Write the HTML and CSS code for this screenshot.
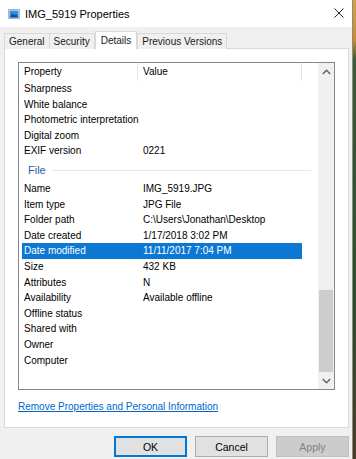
FILE: index.html
```html
<!DOCTYPE html>
<html>
<head>
    <title>IMG_5919 Properties</title>
    <link rel="stylesheet" href="styles.css">
</head>
<body>

<div class="window">
    <div class="titlebar">
        <svg class="title-icon" width="12" height="12" viewBox="0 0 12 12">
            <rect x="0.5" y="1.5" width="11" height="9" fill="#fff" stroke="#9fb6cc"/>
            <rect x="1.5" y="2.5" width="9" height="7" fill="#2f8fe0"/>
            <path d="M1.5 9.5 L4.5 5.5 L6.5 7.5 L8 6 L10.5 9.5 Z" fill="#0d4f9a"/>
        </svg>
        <span class="title-text">IMG_5919 Properties</span>
        <svg class="close" width="10" height="10" viewBox="0 0 10 10">
            <path d="M0.5 0.5 L9.5 9.5 M9.5 0.5 L0.5 9.5" stroke="#222" stroke-width="1"/>
        </svg>
    </div>

    <div class="tabs">
        <div class="tab">General</div>
        <div class="tab">Security</div>
        <div class="tab active">Details</div>
        <div class="tab">Previous Versions</div>
    </div>

    <div class="panel">
        <div class="list">
            <div class="list-body">
                <div class="list-header">
                    <div class="col-name">Property</div>
                    <div class="col-value">Value</div>
                </div>
                <div class="row"><div class="col-name">Sharpness</div><div class="col-value"></div></div>
                <div class="row"><div class="col-name">White balance</div><div class="col-value"></div></div>
                <div class="row"><div class="col-name">Photometric interpretation</div><div class="col-value"></div></div>
                <div class="row"><div class="col-name">Digital zoom</div><div class="col-value"></div></div>
                <div class="row"><div class="col-name">EXIF version</div><div class="col-value">0221</div></div>
                <div class="group">
                    <span>File</span>
                    <div class="group-line"></div>
                </div>
                <div class="row"><div class="col-name">Name</div><div class="col-value">IMG_5919.JPG</div></div>
                <div class="row"><div class="col-name">Item type</div><div class="col-value">JPG File</div></div>
                <div class="row"><div class="col-name">Folder path</div><div class="col-value">C:\Users\Jonathan\Desktop</div></div>
                <div class="row"><div class="col-name">Date created</div><div class="col-value">1/17/2018 3:02 PM</div></div>
                <div class="row selected"><div class="col-name">Date modified</div><div class="col-value">11/11/2017 7:04 PM</div></div>
                <div class="row"><div class="col-name">Size</div><div class="col-value">432 KB</div></div>
                <div class="row"><div class="col-name">Attributes</div><div class="col-value">N</div></div>
                <div class="row"><div class="col-name">Availability</div><div class="col-value">Available offline</div></div>
                <div class="row"><div class="col-name">Offline status</div><div class="col-value"></div></div>
                <div class="row"><div class="col-name">Shared with</div><div class="col-value"></div></div>
                <div class="row"><div class="col-name">Owner</div><div class="col-value"></div></div>
                <div class="row"><div class="col-name">Computer</div><div class="col-value"></div></div>
            </div>
            <div class="scrollbar">
                <div class="arrow">
                    <svg width="9" height="6" viewBox="0 0 9 6"><path d="M0.8 5 L4.5 1.3 L8.2 5" fill="none" stroke="#606060" stroke-width="1.4"/></svg>
                </div>
                <div class="track"><div class="thumb"></div></div>
                <div class="arrow">
                    <svg width="9" height="6" viewBox="0 0 9 6"><path d="M0.8 1 L4.5 4.7 L8.2 1" fill="none" stroke="#606060" stroke-width="1.4"/></svg>
                </div>
            </div>
        </div>
        <a class="remove-link" href="#">Remove Properties and Personal Information</a>
    </div>

    <div class="buttons">
        <button class="default">OK</button>
        <button>Cancel</button>
        <button disabled>Apply</button>
    </div>
</div>
<div class="desktop-edge"></div>

</body>
</html>
```

FILE: styles.css
```css
* { margin: 0; padding: 0; box-sizing: border-box; }
body {
    font-family: "Liberation Sans", Arial, sans-serif;
    font-size: 10px;
    color: #000;
    width: 356px;
    height: 459px;
    display: flex;
    overflow: hidden;
}

/* Dialog window */
.window {
    width: 353px;
    height: 459px;
    background: #f0f0f0;
    display: flex;
    flex-direction: column;
    border-right: 1px solid #8a8a8a;
}

.desktop-edge {
    flex: 1;
    background: linear-gradient(#d9a23c 0, #c58d2c 40px, #3c5a34 60px, #2f4a2c 300px, #4a3a2a 459px);
}

.titlebar {
    height: 27px;
    background: #fff;
    display: flex;
    align-items: center;
    padding-left: 8px;
    padding-right: 8px;
}

.title-icon {
    margin-right: 5px;
}

.title-text {
    font-size: 11px;
    flex: 1;
    padding-top: 1px;
}

.close {
    margin-bottom: 1px;
}

/* Tabs */
.tabs {
    display: flex;
    align-items: flex-end;
    height: 22px;
    padding-left: 4px;
    margin-bottom: -1px;
    position: relative;
    z-index: 1;
}

.tab {
    height: 16px;
    line-height: 15px;
    padding: 0 4px;
    border: 1px solid #d9d9d9;
    border-bottom: none;
    margin-right: -1px;
    background: #f0f0f0;
    font-size: 10px;
    color: #1a1a1a;
}

.tab.active {
    height: 18px;
    line-height: 17px;
    background: #fff;
    padding: 0 5px;
    margin-left: 1px;
    margin-right: 0;
}

.panel {
    margin-left: 4px;
    width: 345px;
    height: 380px;
    background: #fff;
    border: 1px solid #d9d9d9;
    padding: 13px 0 0 13px;
}

/* Property list */
.list {
    width: 317px;
    height: 328px;
    border: 1px solid #828790;
    display: flex;
}

.list-body {
    flex: 1;
    padding-left: 3px;
}

.list-header {
    display: flex;
    height: 18px;
    line-height: 18px;
}

.list-header .col-name {
    border-right: 1px solid #e5e5e5;
}

.list-header .col-value {
    width: 164px;
    border-right: 1px solid #e5e5e5;
}

.row {
    display: flex;
    width: 280px;
    height: 15.6px;
    line-height: 15.6px;
}

.col-name {
    width: 116px;
    padding-left: 2px;
    white-space: nowrap;
}

.col-value {
    padding-left: 5px;
    white-space: nowrap;
}

.row.selected {
    background: #0c78d4;
    color: #fff;
}

.group {
    height: 22px;
    display: flex;
    align-items: center;
    padding-left: 6px;
    padding-top: 1px;
    color: #2a5ca8;
    font-size: 11px;
}

.group-line {
    width: 259px;
    height: 1px;
    background: #e3e8f0;
    margin-left: 6px;
}

.scrollbar {
    width: 16px;
    background: #f0f0f0;
    display: flex;
    flex-direction: column;
}

.arrow {
    height: 17px;
    display: flex;
    align-items: center;
    justify-content: center;
}

.track {
    flex: 1;
    display: flex;
    flex-direction: column;
    justify-content: flex-end;
    padding: 0 1px;
}

.thumb {
    height: 82px;
    background: #cdcdcd;
}

.remove-link {
    display: block;
    margin-top: 11px;
    color: #0066cc;
    text-decoration: underline;
    font-size: 10px;
}

/* Dialog buttons */
.buttons {
    display: flex;
    justify-content: flex-end;
    gap: 8px;
    padding-top: 8px;
    padding-right: 3px;
}

button {
    width: 73px;
    height: 21px;
    background: #e1e1e1;
    border: 1px solid #adadad;
    font-family: inherit;
    font-size: 10.5px;
    color: #000;
}

button.default {
    border: 2px solid #0078d7;
}

button:disabled {
    background: #cccccc;
    border-color: #bfbfbf;
    color: #838383;
}
```
